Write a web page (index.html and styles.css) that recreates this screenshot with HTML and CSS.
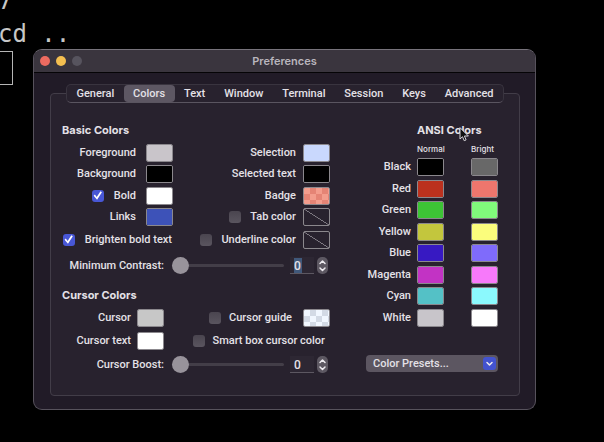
FILE: index.html
```html
<!DOCTYPE html>
<html lang="en">
<head>
<meta charset="utf-8">
<title>Preferences</title>
<link rel="stylesheet" href="styles.css">
</head>
<body>
<div class="terminal">
  <div>7</div>
  <div>cd ..</div>
  <div class="block-cursor"></div>
</div>

<main class="window">
  <header class="titlebar">
    <div class="lights">
      <button class="light close" aria-label="Close"></button>
      <button class="light minimize" aria-label="Minimize"></button>
      <button class="light" aria-label="Zoom" disabled></button>
    </div>
    <h1>Preferences</h1>
  </header>

  <div class="body">
    <div class="panel">
      <nav class="tabs">
        <button>General</button>
        <button class="active">Colors</button>
        <button>Text</button>
        <button>Window</button>
        <button>Terminal</button>
        <button>Session</button>
        <button>Keys</button>
        <button>Advanced</button>
      </nav>

      <div class="content">
        <div class="settings">
          <section>
            <h2>Basic Colors</h2>
            <div class="pairs basic">
              <div class="field"><label for="fg">Foreground</label><input type="color" id="fg" value="#c9c5ca"></div>
              <div class="field"><label for="sel">Selection</label><input type="color" id="sel" value="#c9d8fd"></div>
              <div class="field"><label for="bg">Background</label><input type="color" id="bg" value="#000000"></div>
              <div class="field"><label for="seltext">Selected text</label><input type="color" id="seltext" value="#000000"></div>
              <div class="field"><input type="checkbox" id="boldon" aria-label="Use bold color" checked><label for="bold">Bold</label><input type="color" id="bold" value="#ffffff"></div>
              <div class="field"><label for="badge">Badge</label><input type="color" class="checker badge" id="badge" value="#f08f80"></div>
              <div class="field"><label for="links">Links</label><input type="color" id="links" value="#3d52b8"></div>
              <div class="field"><input type="checkbox" id="tabon"><label for="tabon">Tab color</label><input type="color" class="empty" aria-label="Tab color" disabled></div>
              <div class="field brighten"><input type="checkbox" id="brighten" checked><label for="brighten">Brighten bold text</label></div>
              <div class="field"><input type="checkbox" id="underon"><label for="underon">Underline color</label><input type="color" class="empty" aria-label="Underline color" disabled></div>
            </div>
            <div class="slider-row">
              <label for="contrast">Minimum Contrast:</label>
              <input type="range" id="contrast" min="0" max="100" value="0">
              <span class="number"><input type="text" class="selected" aria-label="Minimum contrast value" value="0"></span>
              <button class="stepper" aria-label="Step contrast"><svg viewBox="0 0 11 17"><path d="M3 6.500 5.500 4 8 6.500M3 11 5.500 13.500 8 11"/></svg></button>
            </div>
          </section>

          <section class="cursor-section">
            <h2>Cursor Colors</h2>
            <div class="pairs cursor">
              <div class="field"><label for="cur">Cursor</label><input type="color" id="cur" value="#c7c7c7"></div>
              <div class="field"><input type="checkbox" id="guide"><label for="guide">Cursor guide</label><input type="color" class="checker guide" aria-label="Cursor guide color" value="#eef5ff"></div>
              <div class="field"><label for="curtext">Cursor text</label><input type="color" id="curtext" value="#ffffff"></div>
              <div class="field smart"><input type="checkbox" id="smart"><label for="smart">Smart box cursor color</label></div>
            </div>
            <div class="slider-row">
              <label for="boost">Cursor Boost:</label>
              <input type="range" id="boost" min="0" max="100" value="0">
              <span class="number"><input type="text" aria-label="Cursor boost value" value="0"></span>
              <button class="stepper" aria-label="Step boost"><svg viewBox="0 0 11 17"><path d="M3 6.500 5.500 4 8 6.500M3 11 5.500 13.500 8 11"/></svg></button>
            </div>
          </section>
        </div>

        <section class="ansi">
          <h2>ANSI Colors</h2>
          <table>
            <thead><tr><td></td><th scope="col">Normal</th><th scope="col">Bright</th></tr></thead>
            <tbody>
              <tr><th scope="row">Black</th><td><input type="color" aria-label="Black normal" value="#000000"></td><td><input type="color" aria-label="Black bright" value="#686868"></td></tr>
              <tr><th scope="row">Red</th><td><input type="color" aria-label="Red normal" value="#bb311e"></td><td><input type="color" aria-label="Red bright" value="#ee766d"></td></tr>
              <tr><th scope="row">Green</th><td><input type="color" aria-label="Green normal" value="#3dc435"></td><td><input type="color" aria-label="Green bright" value="#80fa7b"></td></tr>
              <tr><th scope="row">Yellow</th><td><input type="color" aria-label="Yellow normal" value="#c3c63d"></td><td><input type="color" aria-label="Yellow bright" value="#fbfd7c"></td></tr>
              <tr><th scope="row">Blue</th><td><input type="color" aria-label="Blue normal" value="#3719c2"></td><td><input type="color" aria-label="Blue bright" value="#7f6bfb"></td></tr>
              <tr><th scope="row">Magenta</th><td><input type="color" aria-label="Magenta normal" value="#c233c4"></td><td><input type="color" aria-label="Magenta bright" value="#f779fa"></td></tr>
              <tr><th scope="row">Cyan</th><td><input type="color" aria-label="Cyan normal" value="#54c1c6"></td><td><input type="color" aria-label="Cyan bright" value="#8bf9fd"></td></tr>
              <tr><th scope="row">White</th><td><input type="color" aria-label="White normal" value="#c8c5ca"></td><td><input type="color" aria-label="White bright" value="#ffffff"></td></tr>
            </tbody>
          </table>
          <div class="presets">
            <select aria-label="Color presets"><option>Color Presets...</option></select>
            <span class="chevron"><svg viewBox="0 0 13 13"><path d="M4 5.500 6.500 8 9 5.500"/></svg></span>
          </div>
        </section>
      </div>
    </div>
  </div>
</main>

<svg class="pointer" viewBox="0 0 10 15"><path d="M1 1v11l2.500-2.300 1.700 4 1.900-.8-1.700-3.900H9z"/></svg>
</body>
</html>
```
FILE: styles.css
```css
* { box-sizing: border-box; }

body {
  margin: 0;
  min-height: 100vh;
  background: #000;
  color: #e4e1e7;
  font: 500 11px/16px Roboto, "Liberation Sans", sans-serif;
  overflow: hidden;
}

button, input, select { font: inherit; color: inherit; margin: 0; padding: 0; border: 0; }

h1, h2 { margin: 0; font: 700 11px/16px Inter, "Liberation Sans", sans-serif; }

/* Terminal behind the window */
.terminal {
  position: absolute;
  left: -2px;
  top: -15px;
  color: #c7c7c7;
  font: 24px/33px "DejaVu Sans Mono", monospace;
  white-space: nowrap;
}
.block-cursor { width: 15px; height: 34px; border: 1px solid #b5b5b5; }

/* Window */
.window {
  position: absolute;
  left: 33px;
  right: 68px;
  top: 49px;
  border: 1px solid #57525c;
  border-top-color: #77737b;
  border-radius: 9px;
  background: #211b27;
  overflow: hidden;
}
.titlebar {
  display: grid;
  grid-template-columns: 1fr auto 1fr;
  align-items: center;
  height: 23px;
  padding: 0 6px;
  background: #3a353e;
  border-bottom: 1px solid #050406;
}
.titlebar h1 { color: #b9b5bd; font-weight: 600; }
.lights { display: flex; gap: 6px; }
.light { width: 10px; height: 10px; border-radius: 50%; background: #57545e; }
.close { background: #ed6b60; }
.minimize { background: #f4bf50; }

.body { padding: 20px 15px 13px 16px; }
.panel { border: 1px solid #423d48; border-radius: 4px; background: #28222e; }

.tabs {
  display: flex;
  height: 19px;
  margin: -10px 15px 0;
  border: 1px solid #39343f;
  border-bottom-color: #5a5560;
  border-radius: 5px;
  background: #28222e;
}
.tabs button { flex: 1 1 auto; background: none; border-radius: 4px; line-height: 16px; }
.tabs .active { background: #5d5763; }

.content {
  display: flex;
  justify-content: space-between;
  padding: 19px 21px 20px 11px;
}

/* Left side */
.settings { width: 268px; }
.pairs { display: grid; margin-top: 4px; }
.basic { grid-template-columns: 111px 1fr; grid-template-rows: 21px 22px 21px 22px 23px; }
.cursor { grid-template-columns: 102px 1fr; grid-template-rows: 23px 23px; margin-top: 3px; }
.cursor-section { margin-top: 11px; }
.field { display: flex; align-items: center; justify-content: flex-end; gap: 10px; white-space: nowrap; }
.field:nth-child(even) { gap: 7px; }
.cursor .field { gap: 6px; }
.field:nth-child(even) input[type="checkbox"] { margin-right: 2px; }
.brighten { padding-right: 1px; }
.guide { margin-left: 5px; }
.smart { padding-right: 5px; }

input[type="color"] {
  appearance: none;
  flex: none;
  display: block;
  width: 27px;
  height: 18px;
  border: 1px solid #8b888d;
  border-radius: 2px;
  background: none;
}
input[type="color"]::-webkit-color-swatch-wrapper { padding: 0; }
input[type="color"]::-webkit-color-swatch { border: 0; border-radius: 0; }
.checker::-webkit-color-swatch, .empty::-webkit-color-swatch { visibility: hidden; }
input.badge { background: repeating-conic-gradient(#e58475 0 25%, #f39d8d 0 50%) 0 0 / 12px 12px; }
input.guide { background: repeating-conic-gradient(#d3dae5 0 25%, #f1f7ff 0 50%) 0 0 / 12px 12px; }
input.empty { background: linear-gradient(to top right, transparent 48%, #817d85 49% 51%, transparent 52%); }

input[type="checkbox"] {
  appearance: none;
  flex: none;
  width: 12px;
  height: 12px;
  border-radius: 3px;
  background: linear-gradient(#4a454f, #5a555f);
}
input[type="checkbox"]:checked { background: #4857d6; display: grid; place-items: center; }
input[type="checkbox"]:checked::before {
  content: "";
  width: 9px;
  height: 9px;
  background: #fff;
  clip-path: polygon(4% 52%, 18% 40%, 38% 66%, 80% 4%, 96% 14%, 42% 96%);
}

.slider-row {
  display: grid;
  grid-template-columns: 102px 1fr 24px 11px;
  align-items: center;
  height: 21px;
  margin-top: 4px;
  padding-right: 5px;
  white-space: nowrap;
}
.cursor-section .slider-row { margin-top: 2px; }
.slider-row label { text-align: right; }
input[type="range"] { appearance: none; min-width: 0; height: 17px; margin: 0 6px 0 8px; background: none; }
input[type="range"]::-webkit-slider-runnable-track { height: 3px; border-radius: 2px; background: #433e48; }
input[type="range"]::-webkit-slider-thumb {
  appearance: none;
  width: 17px;
  height: 17px;
  margin-top: -7px;
  border-radius: 50%;
  background: #98939b;
}
.number { display: flex; width: 24px; height: 17px; padding: 1px 0 0 4px; background: #2d2733; border-bottom: 1px solid #5c5761; }
.number input { width: 8px; height: 15px; font-size: 12px; background: none; }
.number .selected { background: #40587a; }
.stepper { width: 11px; height: 17px; margin-left: 3px; border-radius: 5px; background: #5d5862; }

svg { display: block; fill: none; stroke: #eeebf0; stroke-width: 1.5; stroke-linecap: round; stroke-linejoin: round; }

/* ANSI palette */
.ansi { width: 132px; display: flex; flex-direction: column; }
.ansi h2 { padding-left: 51px; white-space: nowrap; }
table { border-collapse: collapse; table-layout: fixed; width: 132px; margin-top: 4px; }
th, td { padding: 0; font-weight: 500; text-align: left; }
thead td { width: 51px; }
thead th { height: 14px; font: 500 8px/14px Inter, "Liberation Sans", sans-serif; }
thead th:nth-child(2) { width: 54px; }
tbody tr { height: 22px; }
tbody tr:nth-child(even) { height: 21px; }
tbody th { display: flex; justify-content: flex-end; padding: 3px 6px 0 0; line-height: 16px; }

.presets { display: grid; align-items: center; margin-top: auto; margin-bottom: 3px; }
.presets select, .chevron { grid-area: 1 / 1; }
.presets select { appearance: none; width: 100%; height: 17px; padding-left: 7px; border-radius: 4px; background: #5c5661; }
.chevron { justify-self: end; width: 13px; height: 13px; margin-right: 2px; border-radius: 3px; background: #4353d0; pointer-events: none; }

.pointer { position: absolute; left: 459px; top: 127px; width: 10px; height: 15px; fill: #111; stroke: #d5d2d8; stroke-width: 1; }
```
